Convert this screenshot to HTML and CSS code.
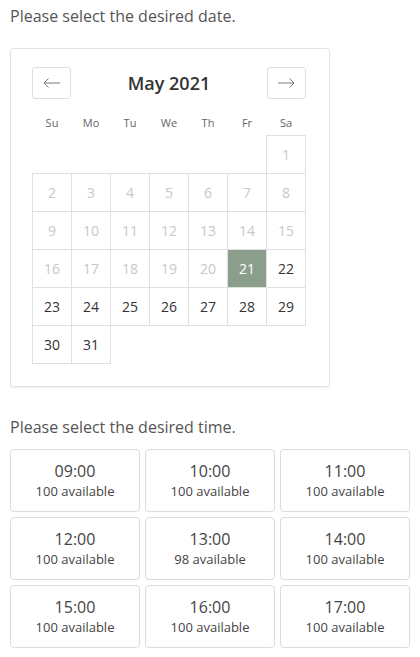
FILE: index.html
```html
<!DOCTYPE html>
<html lang="en">
<head>
<meta charset="utf-8">
<title>Select date and time</title>
<link rel="stylesheet" href="styles.css">
</head>
<body>
<p class="label">Please select the desired date.</p>
<div class="calendar">
  <div class="cal-head">
    <button class="nav" aria-label="Previous month">
      <svg width="18" height="10" viewBox="0 0 18 10"><path d="M1 5H17M5.5 0.5L1 5L5.5 9.5" fill="none" stroke="#7a7a7a" stroke-width="1"/></svg>
    </button>
    <div class="month">May 2021</div>
    <button class="nav" aria-label="Next month">
      <svg width="18" height="10" viewBox="0 0 18 10"><path d="M1 5H17M12.5 0.5L17 5L12.5 9.5" fill="none" stroke="#7a7a7a" stroke-width="1"/></svg>
    </button>
  </div>
  <table class="days">
    <thead>
      <tr><th>Su</th><th>Mo</th><th>Tu</th><th>We</th><th>Th</th><th>Fr</th><th>Sa</th></tr>
    </thead>
    <tbody>
      <tr><td class="empty"></td><td class="empty"></td><td class="empty"></td><td class="empty"></td><td class="empty"></td><td class="empty"></td><td class="off">1</td></tr>
      <tr><td class="off">2</td><td class="off">3</td><td class="off">4</td><td class="off">5</td><td class="off">6</td><td class="off">7</td><td class="off">8</td></tr>
      <tr><td class="off">9</td><td class="off">10</td><td class="off">11</td><td class="off">12</td><td class="off">13</td><td class="off">14</td><td class="off">15</td></tr>
      <tr><td class="off">16</td><td class="off">17</td><td class="off">18</td><td class="off">19</td><td class="off">20</td><td class="sel">21</td><td>22</td></tr>
      <tr><td>23</td><td>24</td><td>25</td><td>26</td><td>27</td><td>28</td><td>29</td></tr>
      <tr><td>30</td><td>31</td><td class="empty"></td><td class="empty"></td><td class="empty"></td><td class="empty"></td><td class="empty"></td></tr>
    </tbody>
  </table>
</div>
<p class="label label-time">Please select the desired time.</p>
<div class="times">
  <button class="slot"><span class="t">09:00</span><span class="a">100 available</span></button>
  <button class="slot"><span class="t">10:00</span><span class="a">100 available</span></button>
  <button class="slot"><span class="t">11:00</span><span class="a">100 available</span></button>
  <button class="slot"><span class="t">12:00</span><span class="a">100 available</span></button>
  <button class="slot"><span class="t">13:00</span><span class="a">98 available</span></button>
  <button class="slot"><span class="t">14:00</span><span class="a">100 available</span></button>
  <button class="slot"><span class="t">15:00</span><span class="a">100 available</span></button>
  <button class="slot"><span class="t">16:00</span><span class="a">100 available</span></button>
  <button class="slot"><span class="t">17:00</span><span class="a">100 available</span></button>
</div>
</body>
</html>
```
FILE: styles.css
```css
* { box-sizing: border-box; }
html, body { margin: 0; background: #fff; }
body {
  padding: 0 10px;
  font-family: "Open Sans", "Liberation Sans", sans-serif;
  color: #333;
}
.label {
  margin: 5px 0 0;
  font-size: 16px;
  line-height: 22px;
  color: #555;
}
.calendar {
  width: 320px;
  margin-top: 21px;
  padding: 18px 0 22px 21px;
  border: 1px solid #e3e3e3;
  border-radius: 3px;
  box-shadow: 0 1px 2px rgba(0,0,0,0.07);
}
.cal-head {
  width: 274px;
  display: flex;
  align-items: center;
  justify-content: space-between;
}
.nav {
  width: 39px;
  height: 32px;
  padding: 0;
  border: 1px solid #dedede;
  border-radius: 3px;
  background: #fff;
  display: flex;
  align-items: center;
  justify-content: center;
}
.month {
  font-size: 18px;
  font-weight: 600;
  color: #333;
}
.days {
  border-collapse: collapse;
  margin-top: 14px;
}
.days th {
  height: 22px;
  padding: 0 0 1px;
  font-size: 11px;
  font-weight: 400;
  color: #666;
  vertical-align: top;
  line-height: 20px;
}
.days td {
  width: 39px;
  height: 38px;
  padding: 0;
  border: 1px solid #e0e0e0;
  text-align: center;
  font-size: 14px;
  color: #333;
}
.days td.empty { border: none; }
.days td.off { color: #c8c8c8; }
.days td.sel { background: #8b9e8b; color: #fff; }
.label-time { margin-top: 29px; }
.times {
  margin-top: 11px;
  display: grid;
  grid-template-columns: repeat(3, 130px);
  gap: 5px;
}
.slot {
  height: 63px;
  padding: 0;
  border: 1px solid #dcdcdc;
  border-radius: 4px;
  background: #fff;
  font-family: inherit;
  display: flex;
  flex-direction: column;
  align-items: center;
  justify-content: center;
}
.slot .t {
  font-size: 16px;
  line-height: 22px;
  color: #444;
}
.slot .a {
  font-size: 13px;
  line-height: 18px;
  color: #444;
}
```
